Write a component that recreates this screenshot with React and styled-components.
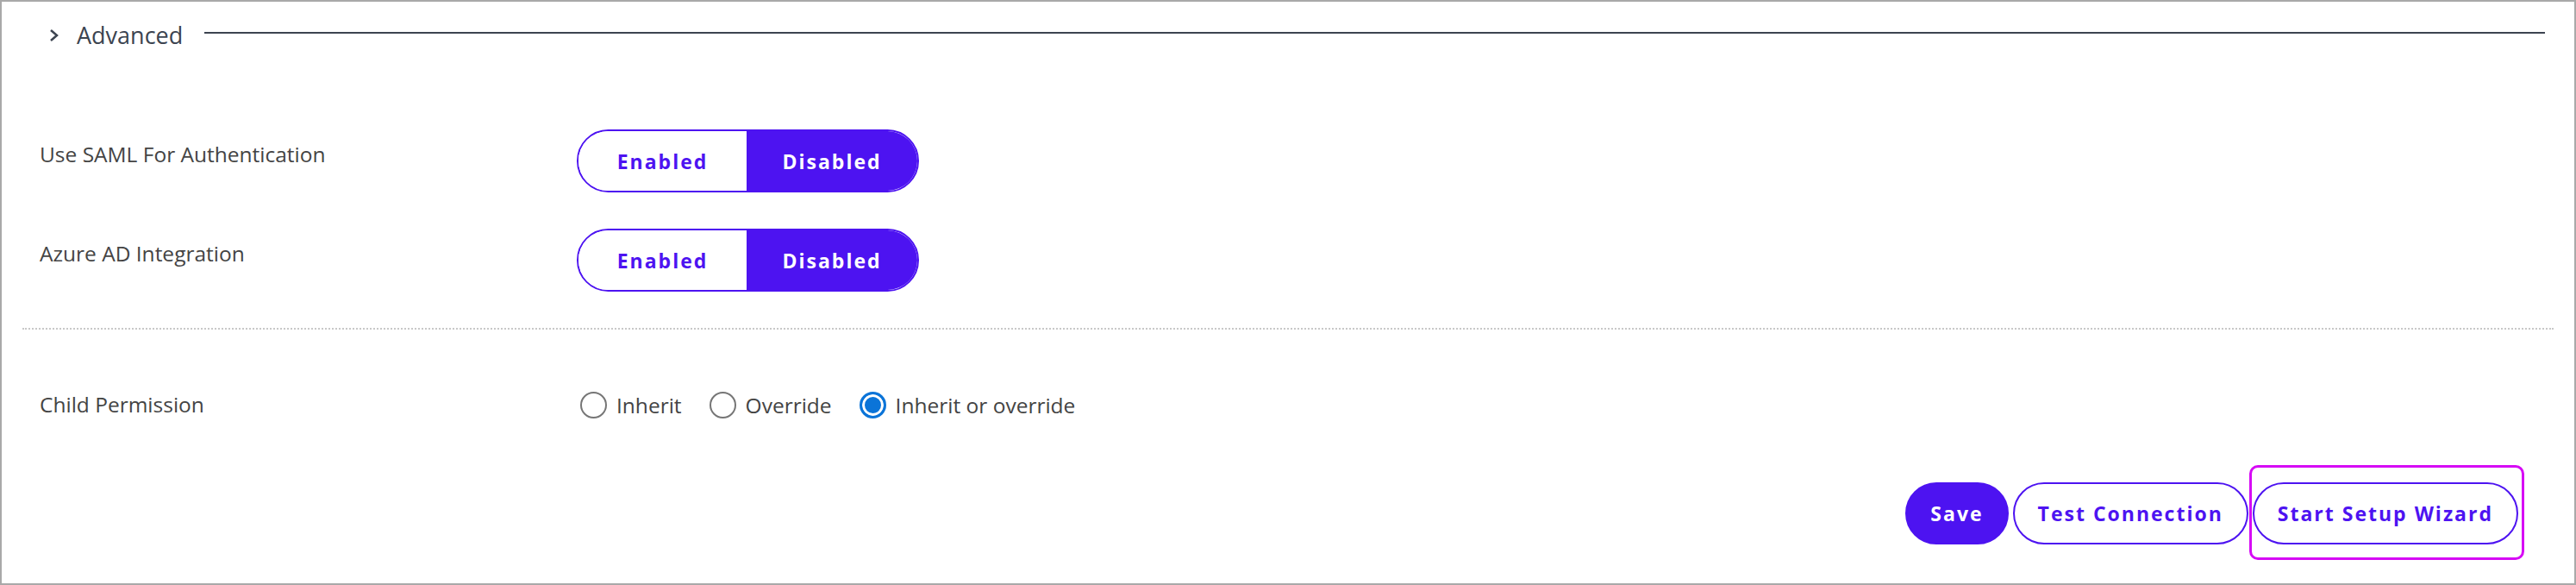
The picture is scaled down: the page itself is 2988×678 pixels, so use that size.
import React, { useState } from "react";
import styled, { createGlobalStyle } from "styled-components";

const PURPLE = "#4d13f1";

const GlobalStyle = createGlobalStyle`
  html, body {
    margin: 0;
    padding: 0;
    background: #fff;
  }
  body {
    font-family: "Open Sans", "Liberation Sans", sans-serif;
  }
  * {
    box-sizing: border-box;
  }
`;

const Frame = styled.div`
  width: 2988px;
  height: 678px;
  border: 2px solid #a9a9a9;
  padding: 0 24px;
  overflow: hidden;
  background: #fff;
`;

// collapsible section header
const Header = styled.div`
  display: flex;
  align-items: center;
  height: 76px;
  padding: 0 10px 0 31px;
`;

const Chevron = styled.svg`
  width: 12px;
  height: 16px;
  flex: none;
  margin-top: 2px;
`;

const HeaderTitle = styled.span`
  margin-left: 20px;
  font-size: 27px;
  color: #3c4450;
  white-space: nowrap;
`;

const HeaderRule = styled.div`
  flex: 1;
  height: 2px;
  margin: -4px 0 0 25px;
  background: #3c4450;
`;

const Section = styled.div`
  display: flex;
  flex-direction: column;
  gap: 42px;
  padding-top: 72px;
`;

const Row = styled.div`
  display: grid;
  grid-template-columns: 623px auto;
  align-items: ${(p) => (p.$center ? "center" : "start")};
  padding-left: 20px;
`;

const Label = styled.div`
  font-size: 24.5px;
  line-height: 32px;
  color: #444;
  padding-top: ${(p) => (p.$center ? "0" : "13px")};
`;

const Toggle = styled.div`
  display: grid;
  grid-template-columns: 195px 1fr;
  width: 397px;
  height: 73px;
  border: 2px solid ${PURPLE};
  border-radius: 37px;
  overflow: hidden;
`;

const Segment = styled.button`
  border: none;
  margin: 0;
  padding: 0;
  font-family: inherit;
  font-size: 23px;
  font-weight: 700;
  letter-spacing: 2px;
  cursor: pointer;
  color: ${(p) => (p.$active ? "#fff" : PURPLE)};
  background: ${(p) => (p.$active ? PURPLE : "#fff")};
`;

const Divider = styled.div`
  margin-top: 42px;
  border-top: 2px dotted #c8c8c8;
`;

const RadioRow = styled(Row)`
  margin-top: 67px;
  height: 40px;
`;

const RadioGroup = styled.div`
  display: flex;
  align-items: center;
  gap: 32px;
  margin-left: 4px;
`;

const RadioOption = styled.label`
  display: flex;
  align-items: center;
  gap: 11px;
  font-size: 24.5px;
  color: #444;
  cursor: pointer;
`;

const RadioInput = styled.input`
  appearance: none;
  margin: 0;
  width: 31px;
  height: 31px;
  border-radius: 50%;
  border: 2px solid #767676;
  background: #fff;
  cursor: pointer;

  &:checked {
    border: 3px solid #0b74d8;
    background: #0b74d8;
    box-shadow: inset 0 0 0 3px #fff;
  }
`;

const Actions = styled.div`
  display: flex;
  justify-content: flex-end;
  gap: 5px;
  margin-top: 70px;
  padding-right: 41px;
`;

const Button = styled.button`
  height: 72px;
  padding: 0 27px;
  border-radius: 36px;
  border: 2px solid ${PURPLE};
  font-family: inherit;
  font-size: 23px;
  font-weight: 700;
  letter-spacing: 2px;
  cursor: pointer;
  color: ${(p) => (p.$primary ? "#fff" : PURPLE)};
  background: ${(p) => (p.$primary ? PURPLE : "#fff")};
`;

// magenta tour highlight laid over the wizard button
const Highlight = styled.span`
  position: relative;
  display: inline-flex;

  &::after {
    content: "";
    position: absolute;
    inset: -20px -7px -18px -4px;
    border: 3px solid #d60af5;
    border-radius: 10px;
    pointer-events: none;
  }
`;

const SwitchRow = ({ label, value, onChange }) => (
  <Row>
    <Label>{label}</Label>
    <Toggle>
      <Segment $active={value} onClick={() => onChange(true)}>
        Enabled
      </Segment>
      <Segment $active={!value} onClick={() => onChange(false)}>
        Disabled
      </Segment>
    </Toggle>
  </Row>
);

const permissionOptions = [
  { id: "inherit", label: "Inherit" },
  { id: "override", label: "Override" },
  { id: "both", label: "Inherit or override" },
];

export default function App() {
  const [saml, setSaml] = useState(false);
  const [azure, setAzure] = useState(false);
  const [permission, setPermission] = useState("both");

  return (
    <>
      <GlobalStyle />
      <Frame>
        <Header>
          <Chevron viewBox="0 0 12 16">
            <polyline
              points="2,2 9,8 2,14"
              fill="none"
              stroke="#3c4450"
              strokeWidth="2.5"
            />
          </Chevron>
          <HeaderTitle>Advanced</HeaderTitle>
          <HeaderRule />
        </Header>

        <Section>
          <SwitchRow
            label="Use SAML For Authentication"
            value={saml}
            onChange={setSaml}
          />
          <SwitchRow
            label="Azure AD Integration"
            value={azure}
            onChange={setAzure}
          />
        </Section>

        <Divider />

        <RadioRow $center>
          <Label $center>Child Permission</Label>
          <RadioGroup>
            {permissionOptions.map((opt) => (
              <RadioOption key={opt.id}>
                <RadioInput
                  type="radio"
                  name="childPermission"
                  checked={permission === opt.id}
                  onChange={() => setPermission(opt.id)}
                />
                {opt.label}
              </RadioOption>
            ))}
          </RadioGroup>
        </RadioRow>

        <Actions>
          <Button $primary>Save</Button>
          <Button>Test Connection</Button>
          <Highlight>
            <Button>Start Setup Wizard</Button>
          </Highlight>
        </Actions>
      </Frame>
    </>
  );
}
